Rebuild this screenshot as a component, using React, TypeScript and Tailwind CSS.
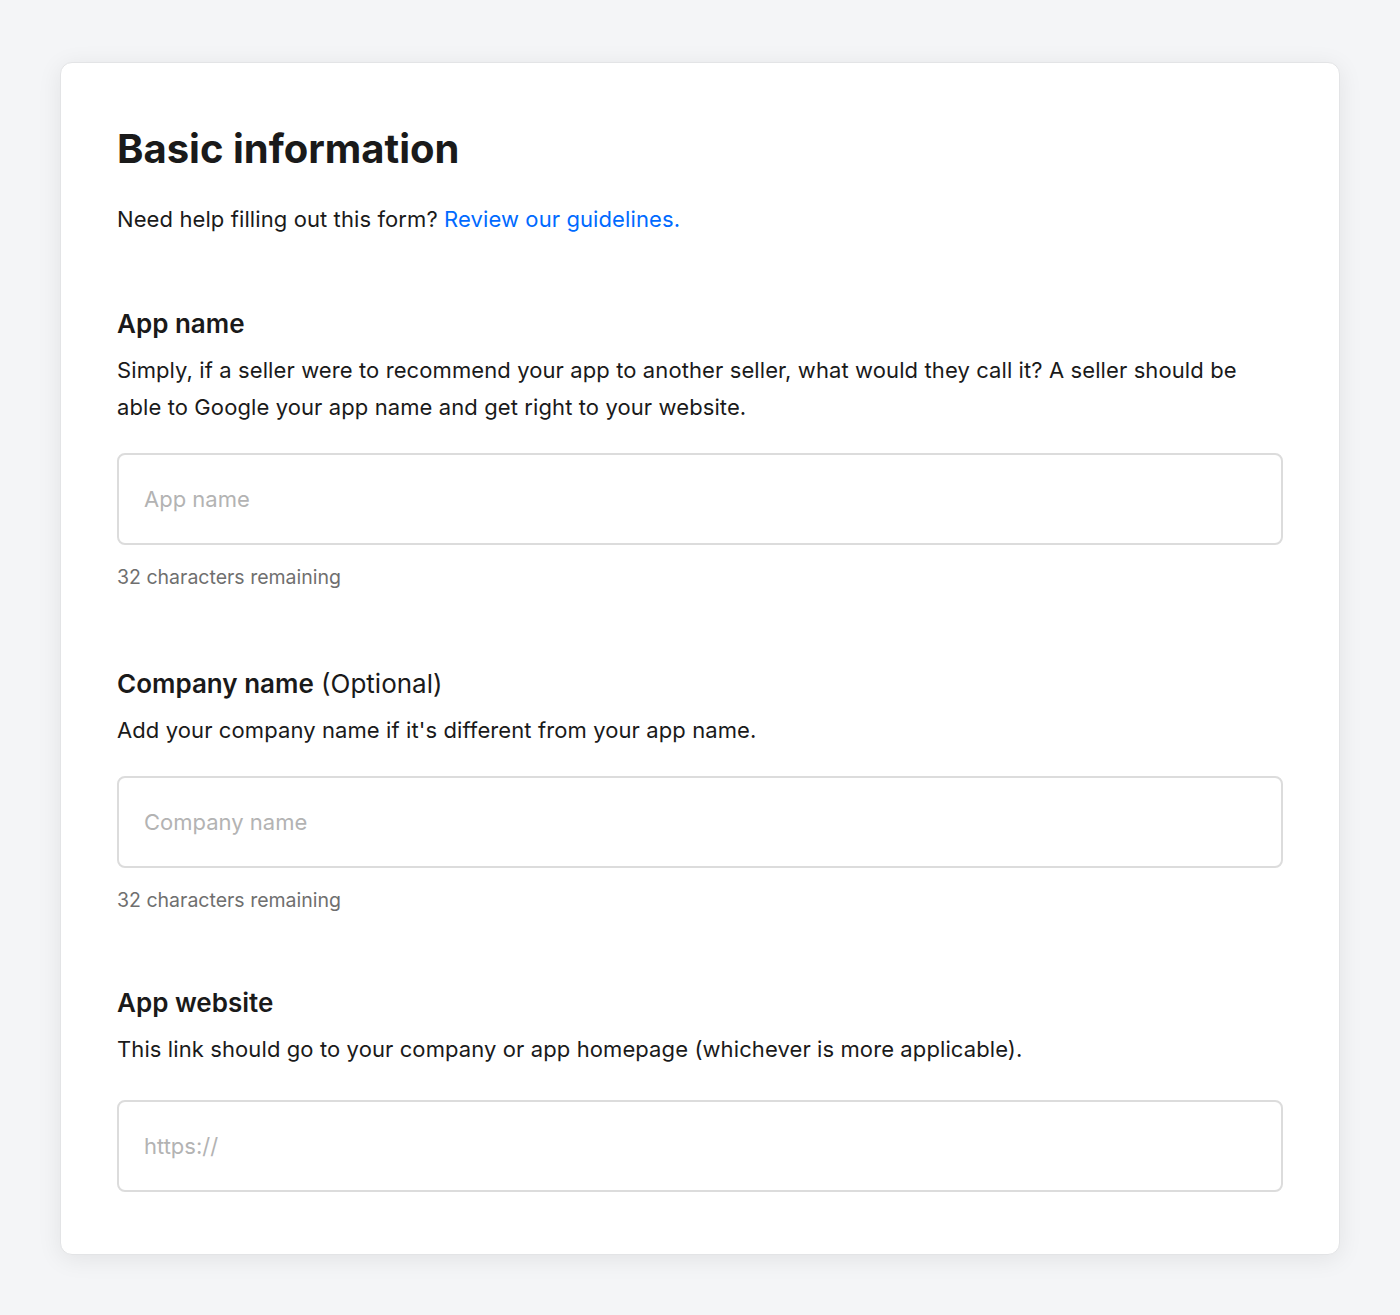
import React from "react";

const Field = ({
  label,
  optional,
  description,
  placeholder,
  helper,
  className,
  inputGap = "mt-[27px]",
}: {
  label: string;
  optional?: boolean;
  description: string;
  placeholder: string;
  helper?: string;
  className?: string;
  inputGap?: string;
}) => {
  return (
    <div className={className}>
      <h2 className="text-[26px] leading-[32px] font-semibold text-[#1a1a1a]">
        {label}
        {optional && <span className="font-normal"> (Optional)</span>}
      </h2>
      <p className="mt-[12px] text-[22px] leading-[37px] tracking-[0.1px] text-[#1a1a1a]">{description}</p>
      <input
        type="text"
        placeholder={placeholder}
        className={`${inputGap} block w-full h-[92px] rounded-[8px] border-2 border-[#dcdcdc] bg-white px-[25px] text-[22px] text-[#1a1a1a] placeholder:text-[#b3b3b3] outline-none`}
      />
      {helper && (
        <p className="mt-[19px] text-[19.5px] leading-[26px] text-[#6f6f6f]">{helper}</p>
      )}
    </div>
  );
};

const App = () => {
  return (
    <div className="min-h-screen bg-[#f4f5f7] pt-[62px] pb-[60px] px-[60px] font-['Inter',sans-serif]">
      <div className="rounded-[12px] bg-white border border-[#e3e4e6] shadow-[0_4px_24px_rgba(0,0,0,0.08)] px-[56px] pt-[62px] pb-[62px]">
        <h1 className="text-[40px] leading-[48px] font-bold text-[#1a1a1a]">
          Basic information
        </h1>
        <p className="mt-[31px] text-[22px] leading-[30px] tracking-[0.1px] text-[#1a1a1a]">
          Need help filling out this form?{" "}
          <a href="#" className="text-[#006aff]">
            Review our guidelines.
          </a>
        </p>

        <Field
          className="mt-[74px]"
          label="App name"
          description="Simply, if a seller were to recommend your app to another seller, what would they call it? A seller should be able to Google your app name and get right to your website."
          placeholder="App name"
          helper="32 characters remaining"
        />

        <Field
          className="mt-[78px]"
          label="Company name"
          optional
          description="Add your company name if it's different from your app name."
          placeholder="Company name"
          helper="32 characters remaining"
        />

        <Field
          className="mt-[74px]"
          inputGap="mt-[32px]"
          label="App website"
          description="This link should go to your company or app homepage (whichever is more applicable)."
          placeholder="https://"
        />
      </div>
    </div>
  );
};

export default App;
